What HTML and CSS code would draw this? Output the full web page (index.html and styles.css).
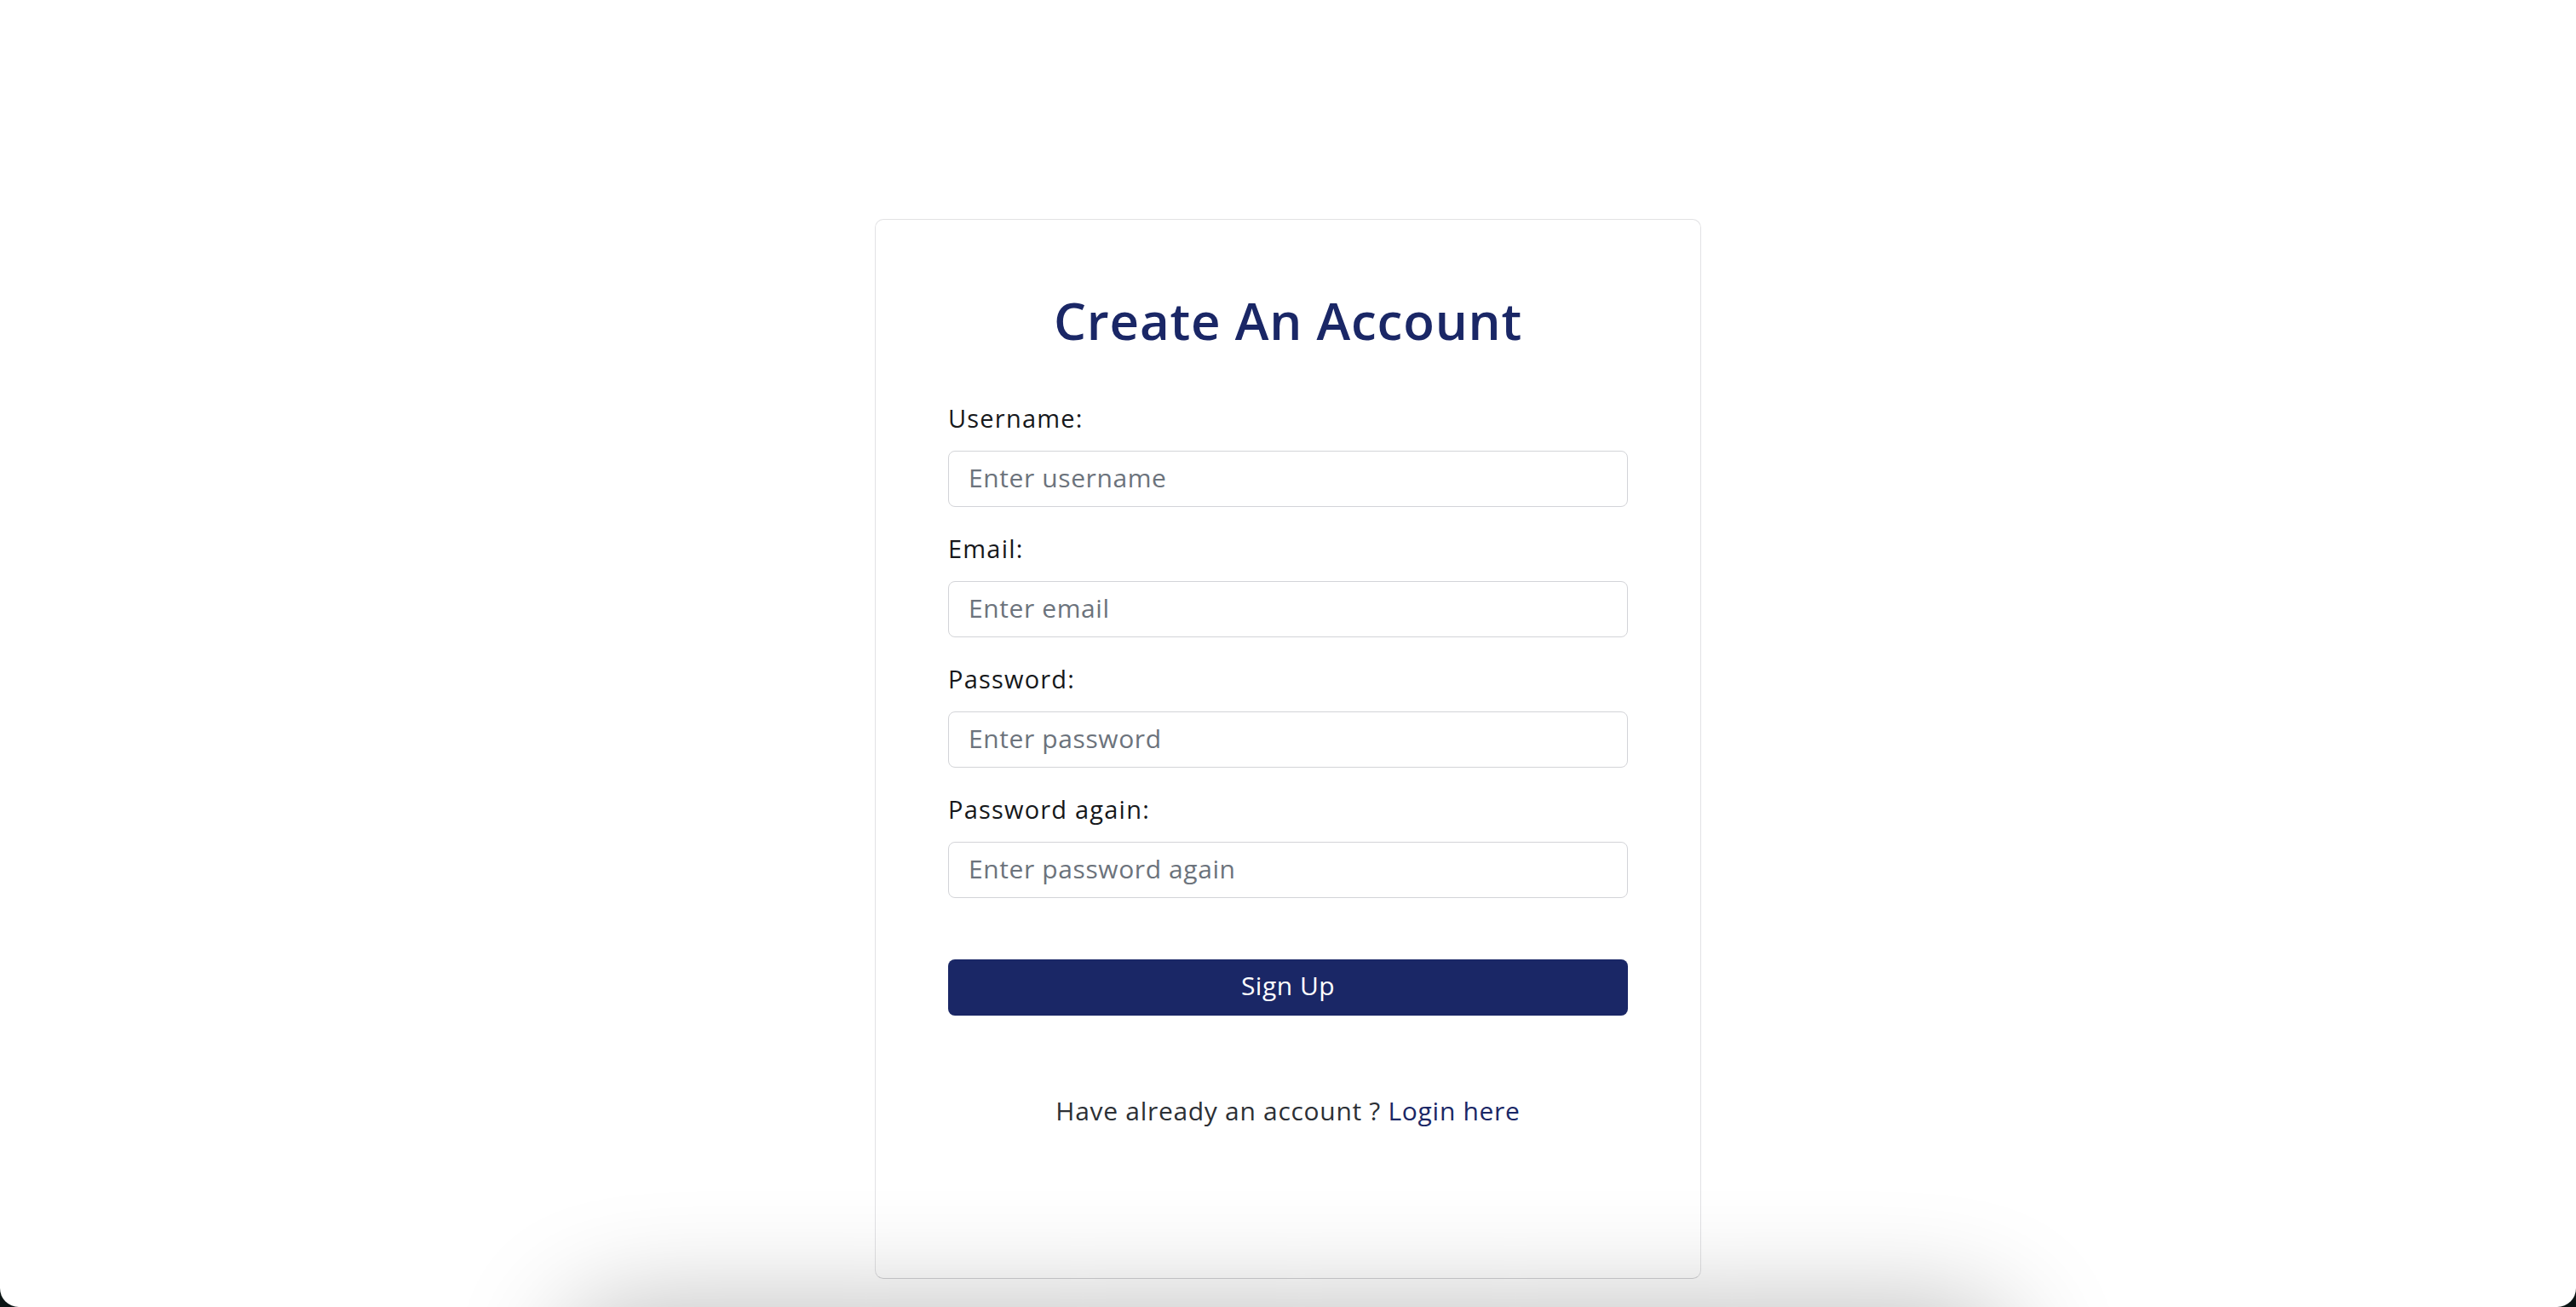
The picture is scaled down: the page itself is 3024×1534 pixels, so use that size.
FILE: index.html
```html
<!DOCTYPE html>
<html lang="en">
<head>
<meta charset="utf-8">
<title>Create An Account</title>
<link rel="stylesheet" href="styles.css">
</head>
<body>
<div class="window">
  <main class="card">
    <h2 class="title">Create An Account</h2>
    <form class="form">
      <div class="field">
        <label class="label" for="username">Username:</label>
        <input class="input" id="username" type="text" placeholder="Enter username">
      </div>
      <div class="field">
        <label class="label" for="email">Email:</label>
        <input class="input" id="email" type="email" placeholder="Enter email">
      </div>
      <div class="field">
        <label class="label" for="password">Password:</label>
        <input class="input" id="password" type="password" placeholder="Enter password">
      </div>
      <div class="field">
        <label class="label" for="password2">Password again:</label>
        <input class="input" id="password2" type="password" placeholder="Enter password again">
      </div>
      <button class="submit" type="button">Sign Up</button>
    </form>
    <p class="switch">Have already an account ? <a class="switch-link" href="#">Login here</a></p>
  </main>
  <div class="shelf"></div>
</div>
</body>
</html>
```
FILE: styles.css
```css
html {
  background: #0b1515;
}

body {
  margin: 0;
  font-family: "Open Sans", "Noto Sans", sans-serif;
  color: #212529;
}

.window {
  height: 100vh;
  box-sizing: border-box;
  padding-top: 257px;
  overflow: hidden;
  background: #ffffff;
  border-radius: 0 0 22px 22px;
}

.card {
  box-sizing: border-box;
  width: 970px;
  margin: 0 auto;
  padding: 82px 85px 174px;
  background: #ffffff;
  border: 1px solid #e2e2e4;
  border-bottom-color: #d2d2d4;
  border-radius: 10px;
}

.title {
  margin: 0 0 59px;
  font-size: 60px;
  line-height: 72px;
  font-weight: 600;
  letter-spacing: 0.8px;
  text-align: center;
  color: #1a2766;
}

.form {
  display: flex;
  flex-direction: column;
}

.field {
  display: flex;
  flex-direction: column;
  margin-bottom: 29px;
}

.label {
  font-size: 29px;
  line-height: 40px;
  letter-spacing: 1.2px;
  margin-bottom: 18px;
  color: #16181b;
}

.input {
  box-sizing: border-box;
  height: 66px;
  padding: 0 23px 3px;
  font-family: inherit;
  font-size: 30px;
  letter-spacing: 0.6px;
  color: #212529;
  background: #ffffff;
  border: 1px solid #d3d4d8;
  border-radius: 8px;
  outline: none;
}

.input::placeholder {
  color: #6c737c;
}

.submit {
  margin-top: 43px;
  height: 66px;
  padding: 0 0 5px;
  font-family: inherit;
  font-size: 30px;
  font-weight: 500;
  letter-spacing: 0.5px;
  color: #ffffff;
  background: #1a2766;
  border: none;
  border-radius: 8px;
}

.switch {
  margin: 90px 0 0;
  font-size: 30px;
  line-height: 44px;
  letter-spacing: 0.7px;
  text-align: center;
  color: #2c3035;
}

.switch-link {
  color: #1a2766;
  text-decoration: none;
}

.shelf {
  width: 1680px;
  height: 300px;
  margin: 43px auto 0;
  background: #e6e6e6;
  border-radius: 60px;
  box-shadow: 0 0 130px 10px rgba(0, 0, 0, 0.28);
}
```
